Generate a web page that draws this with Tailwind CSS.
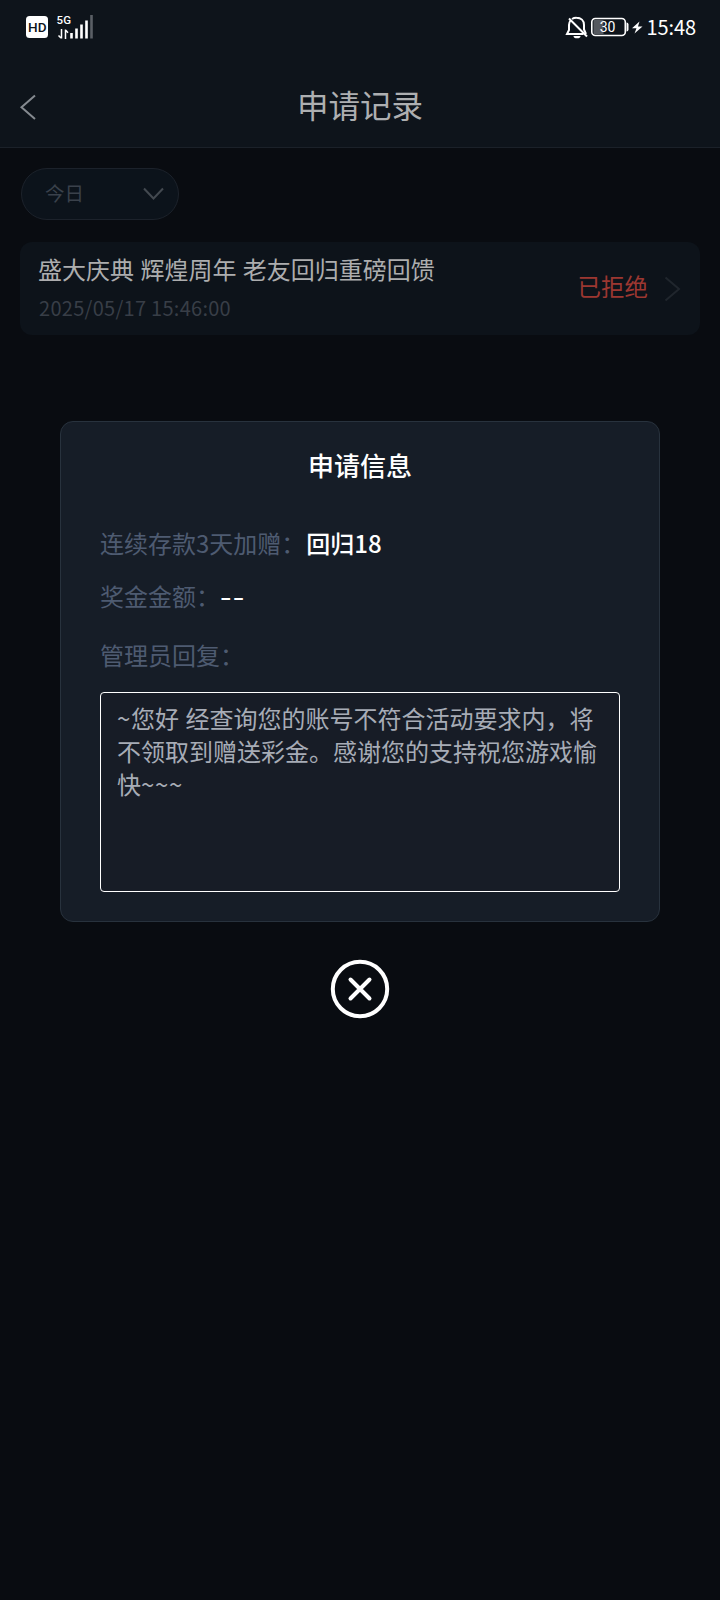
<!DOCTYPE html>
<html lang="zh-CN">
<head>
<meta charset="utf-8">
<meta name="viewport" content="width=device-width, initial-scale=1">
<title>申请记录</title>
<script src="https://cdn.jsdelivr.net/npm/@tailwindcss/browser@4"></script>
</head>
<body class="bg-[#090c11] font-['Noto_Sans_CJK_SC',sans-serif]">
<div class="relative flex h-[1600px] w-[720px] flex-col overflow-hidden bg-[#090c11]">

  <header class="flex h-[148px] flex-col border-b border-[#1b2129] bg-[#0e141b]">
    <div class="flex h-[54px] items-center justify-between pr-[23px] pl-[26px] text-white">
      <div class="flex items-center gap-[8px]">
        <svg width="22" height="22" viewBox="0 0 22 22">
          <rect width="22" height="22" rx="3.5" fill="#fff"/>
          <text x="2" y="15.800" font-family="Roboto, sans-serif" font-size="13.500" font-weight="500" fill="#0e141b" textLength="18.500" lengthAdjust="spacingAndGlyphs">HD</text>
        </svg>
        <svg width="38" height="26" viewBox="56 14 38 26">
          <text x="56.500" y="24" font-family="Roboto, sans-serif" font-size="11.500" font-weight="500" fill="#fff" textLength="14.500">5G</text>
          <path d="M61.500 29v9.500M58.500 35.500l2.500 2.500M65.500 39v-9.500M66 30.500l2 2.200" stroke="#fff" stroke-width="1.500" fill="none"/>
          <path d="M71.500 33v5.500M76.500 28.500v10M81.500 24.500v14M86.500 20.500v18" stroke="#fff" stroke-width="2.600"/>
          <path d="M91.500 15v23.500" stroke="#5b5f66" stroke-width="2.600"/>
        </svg>
      </div>
      <div class="flex items-center">
        <svg width="80" height="26" viewBox="564.500 14 80 26" fill="none" stroke="#fff">
          <path d="M570 20.500c-1 1.300-1.500 3-1.500 4.500v5l-2 4h16.500M571.500 19a8 8 0 0 1 4.500-1.200c4.500 0 7.500 3 7.500 7.200v4.500l2 4.500" stroke-width="2"/>
          <path d="M568.500 18.500l18 18" stroke-width="2"/>
          <path d="M573 36h7a3.500 2.300 0 0 1-7 0z" fill="#fff" stroke="none"/>
          <rect x="593" y="20" width="10" height="14" fill="#55595f" stroke="none"/>
          <rect x="591.300" y="18.500" width="33.500" height="17" rx="3.500" stroke-width="1.600"/>
          <path d="M626 22.500a2 2 0 0 1 2 2v5a2 2 0 0 1-2 2z" fill="#fff" stroke="none"/>
          <text x="607" y="32" text-anchor="middle" font-family="Roboto, sans-serif" font-size="14" fill="#fff" stroke="none" textLength="15.500">30</text>
          <path d="M639 21.500l-7.500 6.800h4.500l-2 5.200 8-7h-4.500z" fill="#fff" stroke="none"/>
        </svg>
        <span class="w-[52px] pl-[1.5px] text-[20px] leading-[30px] tracking-[-0.1px] whitespace-nowrap">15:48</span>
      </div>
    </div>
    <div class="grid h-[93px] grid-cols-[60px_1fr_60px] items-center">
      <svg class="mt-[13px] ml-[19px]" width="18" height="28" viewBox="19 93 18 28" fill="none" stroke="#858a90" stroke-width="2"><path d="M35 95.500L21.500 107.300 35 119"/></svg>
      <h1 class="pt-[7px] text-center text-[31.5px] leading-[40px] font-normal text-[#adafb1]">申请记录</h1>
    </div>
  </header>

  <main class="flex flex-col px-[20px] pt-[20px]">
    <button class="ml-[1px] flex h-[52px] w-[158px] items-center justify-between rounded-full border border-[#1c222b] bg-[#0c131b] pr-[14px] pl-[23px] text-[19.5px] leading-[24px] text-[#3a414b]">
      <span class="-mt-[2px]">今日</span>
      <svg width="21" height="14" viewBox="0 0 21 14" fill="none" stroke="#434950" stroke-width="2"><path d="M1 1.500l9.500 10L20 1.500"/></svg>
    </button>

    <section class="mt-[22px] flex h-[93px] items-center rounded-[12px] bg-[#0d131a] pr-[19px] pl-[18px]">
      <div class="flex flex-1 flex-col">
        <h2 class="text-[24px] leading-[36px] font-normal text-[#acadae] [word-spacing:1px]">盛大庆典 辉煌周年 老友回归重磅回馈</h2>
        <time class="mt-[3px] ml-[1px] text-[20px] leading-[36px] tracking-[0.28px] text-[#383e47]">2025/05/17 15:46:00</time>
      </div>
      <span class="-mt-[4px] text-[23.5px] text-[#9c3731]">已拒绝</span>
      <svg class="ml-[16px]" width="17" height="26" viewBox="0 0 17 26" fill="none" stroke="#20262d" stroke-width="2"><path d="M1.500 1.500L15 13 1.500 24.500"/></svg>
    </section>
  </main>

  <div class="absolute inset-x-0 top-[421px] flex flex-col items-center" role="dialog">
    <section class="flex h-[501px] w-[600px] flex-col rounded-[13px] border border-[#28323d] bg-[#161d27] px-[39px]">
      <h2 class="mt-[23px] text-center text-[26px] leading-[40px] font-medium text-white">申请信息</h2>
      <div class="mt-[40px] flex text-[24px] leading-[36px] text-[#4e5b71]">
        <span>连续存款3天加赠：</span><span class="pl-[1px] font-medium text-white">回归18</span>
      </div>
      <div class="mt-[17px] flex text-[24px] leading-[36px] text-[#4e5b71]">
        <span>奖金金额：</span><span class="origin-left scale-x-[1.35] font-medium tracking-[0.8px] text-white">--</span>
      </div>
      <div class="mt-[23px] text-[24px] leading-[36px] text-[#4e5b71]">管理员回复：</div>
      <div class="mt-[19px] h-[200px] w-[520px] rounded-[4px] border border-white bg-[#171c26] pt-[8px] pl-[16px] text-[24px] leading-[33.4px] whitespace-nowrap text-[#a7acb6]">
        <p class="[word-spacing:1px]"><span class="tracking-[0.7px]">~</span>您好 经查询您的账号不符合活动要求内，将</p>
        <p>不领取到赠送彩金。感谢您的支持祝您游戏愉</p>
        <p class="-mt-[1px]">快<span class="tracking-[0.7px]">~~~</span></p>
      </div>
    </section>
    <button class="mt-[37px]" aria-label="关闭">
      <svg width="60" height="60" viewBox="0 0 60 60" fill="none" stroke="#fff"><circle cx="30" cy="30" r="27.200" stroke-width="4"/><path d="M20.500 20.500l19 19M39.500 20.500l-19 19" stroke-width="4" stroke-linecap="round"/></svg>
    </button>
  </div>
</div>
</body>
</html>
